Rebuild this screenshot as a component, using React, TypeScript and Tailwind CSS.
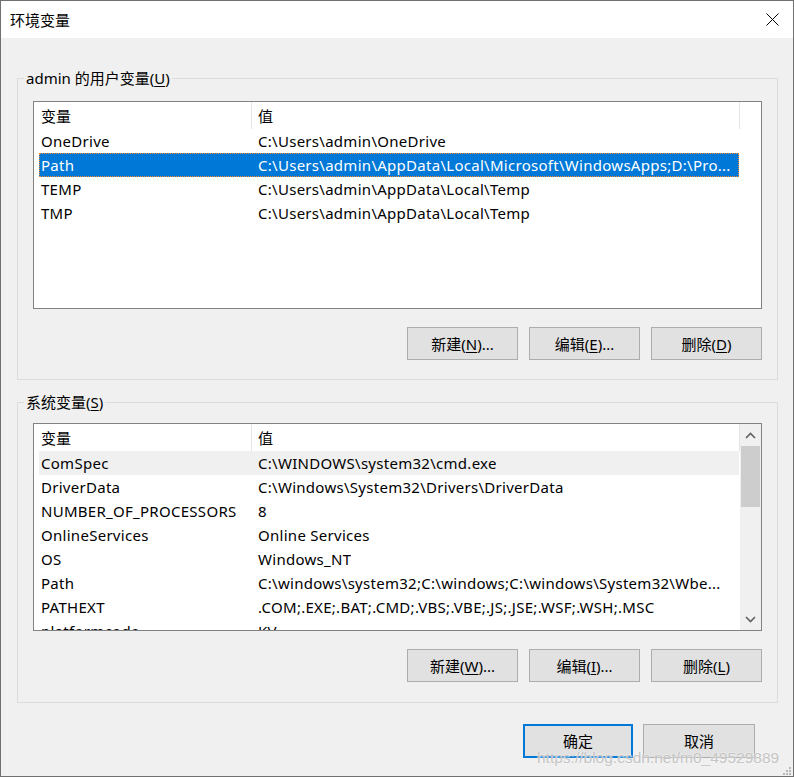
import React from "react";

type Row = [string, string];

const userVars: Row[] = [
  ["OneDrive", "C:\\Users\\admin\\OneDrive"],
  ["Path", "C:\\Users\\admin\\AppData\\Local\\Microsoft\\WindowsApps;D:\\Pro..."],
  ["TEMP", "C:\\Users\\admin\\AppData\\Local\\Temp"],
  ["TMP", "C:\\Users\\admin\\AppData\\Local\\Temp"],
];

const sysVars: Row[] = [
  ["ComSpec", "C:\\WINDOWS\\system32\\cmd.exe"],
  ["DriverData", "C:\\Windows\\System32\\Drivers\\DriverData"],
  ["NUMBER_OF_PROCESSORS", "8"],
  ["OnlineServices", "Online Services"],
  ["OS", "Windows_NT"],
  ["Path", "C:\\windows\\system32;C:\\windows;C:\\windows\\System32\\Wbe..."],
  ["PATHEXT", ".COM;.EXE;.BAT;.CMD;.VBS;.VBE;.JS;.JSE;.WSF;.WSH;.MSC"],
  ["platformcode", "KV"],
];

const Chevron = ({ up }: { up?: boolean }) => (
  <svg width="11" height="7" viewBox="0 0 11 7" className={up ? "" : "rotate-180"}>
    <path d="M1 6 L5.5 1.5 L10 6" fill="none" stroke="#606060" strokeWidth="1.6" />
  </svg>
);

const Btn = ({ label, k, rest }: { label: string; k: string; rest: string }) => (
  <button className="flex h-[33px] w-[111px] items-center justify-center border border-[#adadad] bg-[#e1e1e1] text-[15px] text-black">
    {label}(<span className="underline underline-offset-2">{k}</span>){rest}
  </button>
);

const VarList = ({
  rows,
  selected,
  hover,
  scroll,
}: {
  rows: Row[];
  selected?: number;
  hover?: number;
  scroll?: boolean;
}) => (
  <div className="flex h-[208px] w-[729px] overflow-hidden border border-[#828282] bg-white">
    <div className="min-w-0 flex-1 pl-[5px]">
      <div className="flex h-[27px] items-center">
        <div className="flex h-full w-[213px] items-center border-r border-[#e5e5e5] pl-[2px]">变量</div>
        <div className="flex h-full w-[488px] items-center border-r border-[#e5e5e5] pl-[6px]">值</div>
      </div>
      {rows.map(([name, value], i) => (
        <div
          key={name + i}
          className={
            i === selected
              ? "flex h-[24px] w-[700px] items-center border border-dotted border-[#ff8728] bg-[#0078d7] tracking-[0.28px] text-white"
              : i === hover
                ? "flex h-[24px] w-[700px] items-center border border-transparent bg-[#f0f0f0] tracking-[0.28px]"
                : "flex h-[24px] w-[700px] items-center border border-transparent tracking-[0.28px]"
          }
        >
          <div className="w-[218px] shrink-0 pl-[1px]">{name}</div>
          <div className="overflow-hidden whitespace-nowrap">{value}</div>
        </div>
      ))}
    </div>
    {scroll && (
      <div className="flex w-[21px] flex-col bg-[#f0f0f0]">
        <div className="flex h-[22px] items-center justify-center">
          <Chevron up />
        </div>
        <div className="mx-[1px] h-[61px] bg-[#cdcdcd]" />
        <div className="flex-1" />
        <div className="flex h-[22px] items-center justify-center">
          <Chevron />
        </div>
      </div>
    )}
  </div>
);

export default function App() {
  return (
    <div className="relative h-[777px] w-[794px] overflow-hidden border border-[#707070] bg-[#f0f0f0] font-['Noto_Sans','Noto_Sans_CJK_SC',sans-serif] text-[15px] leading-[20px] text-black">
      {/* title bar */}
      <div className="flex h-[37px] items-center justify-between bg-white pl-[9px] pr-[14px]">
        <span>环境变量</span>
        <svg width="13" height="13" viewBox="0 0 13 13">
          <path d="M0.5 0.5 L12.5 12.5 M12.5 0.5 L0.5 12.5" stroke="#000" strokeWidth="1" />
        </svg>
      </div>

      <div className="pl-[16px] pt-[40px]">
        {/* user variables */}
        <div className="relative h-[302px] w-[761px] border border-[#dcdcdc] px-[15px] pt-[22px]">
          <span className="absolute -top-[11px] left-[6px] bg-[#f0f0f0] px-[2px]">
            admin 的用户变量(<span className="underline underline-offset-2">U</span>)
          </span>
          <VarList rows={userVars} selected={1} />
          <div className="mt-[18px] flex justify-end gap-[11px]">
            <Btn label="新建" k="N" rest="..." />
            <Btn label="编辑" k="E" rest="..." />
            <Btn label="删除" k="D" rest="" />
          </div>
        </div>

        {/* system variables */}
        <div className="relative mt-[22px] h-[301px] w-[761px] border border-[#dcdcdc] px-[15px] pt-[20px]">
          <span className="absolute -top-[11px] left-[6px] bg-[#f0f0f0] px-[2px]">
            系统变量(<span className="underline underline-offset-2">S</span>)
          </span>
          <VarList rows={sysVars} hover={0} scroll />
          <div className="mt-[18px] flex justify-end gap-[11px]">
            <Btn label="新建" k="W" rest="..." />
            <Btn label="编辑" k="I" rest="..." />
            <Btn label="删除" k="L" rest="" />
          </div>
        </div>

        <div className="mt-[21px] flex w-[761px] justify-end gap-[10px] pr-[23px]">
          <button className="flex h-[34px] w-[110px] items-center justify-center border-2 border-[#0078d7] bg-[#e1e1e1]">
            确定
          </button>
          <button className="flex h-[34px] w-[112px] items-center justify-center border border-[#adadad] bg-[#e1e1e1]">
            取消
          </button>
        </div>
      </div>

      {/* watermark */}
      <span className="pointer-events-none absolute left-[536px] top-[748px] font-['Liberation_Sans',sans-serif] text-[15.5px] leading-[18px] text-[#c4c4c4] [text-shadow:0_0_2px_#ffffff]">
        https://blog.csdn.net/m0_49529889
      </span>
      <svg className="absolute bottom-[1px] right-[2px]" width="8" height="8" viewBox="0 0 8 8">
        <rect x="6" y="0" width="2" height="2" fill="#b8b8b8" />
        <rect x="3" y="3" width="2" height="2" fill="#b8b8b8" />
        <rect x="6" y="3" width="2" height="2" fill="#b8b8b8" />
        <rect x="0" y="6" width="2" height="2" fill="#b8b8b8" />
        <rect x="3" y="6" width="2" height="2" fill="#b8b8b8" />
        <rect x="6" y="6" width="2" height="2" fill="#b8b8b8" />
      </svg>
    </div>
  );
}
